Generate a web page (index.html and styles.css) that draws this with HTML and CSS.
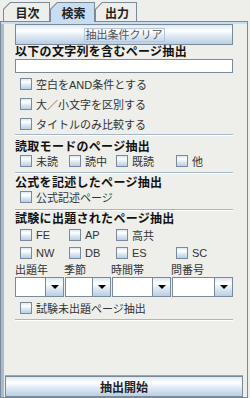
FILE: index.html
```html
<!DOCTYPE html>
<html lang="ja">
    <head>
        <meta charset="UTF-8">
        <title>検索</title>
        <link rel="stylesheet" href="styles.css">
    </head>
    <body>
        <div class="window">
            <div class="tabs">
                <div class="tab"><div class="tab-label">目次</div></div>
                <div class="tab tab-selected"><div class="tab-label">検索</div></div>
                <div class="tab tab-last"><div class="tab-label">出力</div></div>
            </div>
            <div class="panel">
                <div class="content">
                    <button class="btn btn-clear"><span class="focus">抽出条件クリア</span></button>

                    <div class="heading">以下の文字列を含むページ抽出</div>
                    <input type="text" class="field">
                    <label class="check first"><input type="checkbox">空白をAND条件とする</label>
                    <label class="check"><input type="checkbox">大／小文字を区別する</label>
                    <label class="check"><input type="checkbox">タイトルのみ比較する</label>
                    <div class="sep"></div>

                    <div class="heading h-read">読取モードのページ抽出</div>
                    <div class="group row-read">
                        <label class="check"><input type="checkbox">未読</label>
                        <label class="check"><input type="checkbox">読中</label>
                        <label class="check"><input type="checkbox">既読</label>
                        <label class="check"><input type="checkbox">他</label>
                    </div>
                    <div class="sep sep-read"></div>

                    <div class="heading h-formula">公式を記述したページ抽出</div>
                    <label class="check row-formula"><input type="checkbox">公式記述ページ</label>
                    <div class="sep sep-formula"></div>

                    <div class="heading h-exam">試験に出題されたページ抽出</div>
                    <div class="group row-exam">
                        <label class="check"><input type="checkbox">FE</label>
                        <label class="check"><input type="checkbox">AP</label>
                        <label class="check"><input type="checkbox">高共</label>
                        <span></span>
                    </div>
                    <div class="group row-exam">
                        <label class="check"><input type="checkbox">NW</label>
                        <label class="check"><input type="checkbox">DB</label>
                        <label class="check"><input type="checkbox">ES</label>
                        <label class="check"><input type="checkbox">SC</label>
                    </div>
                    <div class="group combo-labels">
                        <span>出題年</span>
                        <span>季節</span>
                        <span>時間帯</span>
                        <span>問番号</span>
                    </div>
                    <div class="group combos">
                        <div class="combo"><div class="combo-field"></div><div class="combo-arrow"></div></div>
                        <div class="combo"><div class="combo-field"></div><div class="combo-arrow"></div></div>
                        <div class="combo"><div class="combo-field"></div><div class="combo-arrow"></div></div>
                        <div class="combo"><div class="combo-field"></div><div class="combo-arrow"></div></div>
                    </div>
                    <label class="check row-unused"><input type="checkbox">試験未出題ページ抽出</label>
                    <div class="sep sep-exam"></div>
                </div>
                <div class="footer">
                    <button class="btn btn-start">抽出開始</button>
                </div>
            </div>
        </div>
    </body>
</html>
```

FILE: styles.css
```css
/* Global styles */
* {
    margin: 0;
    padding: 0;
    box-sizing: border-box;
}

body {
    background-color: #eeeeea;
    font-family: "Liberation Sans", "Noto Sans CJK JP", sans-serif;
    font-size: 11px;
    color: #333;
}

.window {
    width: 250px;
    height: 398px;
    display: flex;
    flex-direction: column;
}

/* Tabs */
.tabs {
    height: 21px;
    display: flex;
    align-items: flex-end;
    padding-left: 3px;
}

.tab {
    width: 47px;
    height: 19px;
    background: #7a8a99;
    padding: 1px 1px 0 1px;
    clip-path: polygon(0 7px, 7px 0, 100% 0, 100% 100%, 0 100%);
}

.tab-selected {
    width: 45px;
    height: 20px;
    margin-bottom: -1px;
    position: relative;
    z-index: 1;
}

.tab-last {
    width: 42px;
}

.tab-label {
    height: 100%;
    background: #eeeeea;
    clip-path: polygon(0 6.5px, 6.5px 0, 100% 0, 100% 100%, 0 100%);
    display: flex;
    align-items: center;
    justify-content: center;
    padding-left: 2px;
    font-size: 12px;
    font-weight: bold;
    color: #222;
}

.tab-selected .tab-label {
    background: #c8ddf2;
}

/* Panel */
.panel {
    flex: 1;
    margin: 0 2px 0 0;
    border: 1px solid #7a8a99;
    box-shadow: inset 0 2px 0 #c8ddf2, inset 3px 0 0 #a9bccf;
    display: flex;
    flex-direction: column;
    padding: 0 4px 0 4px;
}

.content {
    flex: 1;
    padding: 2px 10px 0;
    display: flex;
    flex-direction: column;
}

.btn {
    width: 100%;
    height: 21px;
    border: 1px solid #7a8a99;
    background: linear-gradient(to bottom, #dde8f3 0%, #ffffff 30%, #dde8f3 60%, #b8cfe5 100%);
    font-family: inherit;
    display: flex;
    align-items: center;
    justify-content: center;
}

.btn-clear {
    font-size: 11px;
    color: #555;
}

.btn-clear .focus {
    border: 1px solid #b3c6da;
    padding: 0 1px;
    line-height: 12px;
}

.btn-start {
    font-size: 12px;
    font-weight: bold;
    color: #222;
}

.heading {
    height: 14px;
    line-height: 14px;
    font-size: 12px;
    font-weight: bold;
    color: #111;
    letter-spacing: 0.3px;
}

.field {
    width: 100%;
    height: 14px;
    border: 1px solid #7a8a99;
    background: #fff;
}

.check {
    display: flex;
    align-items: center;
    height: 20px;
    padding-left: 5px;
    gap: 4px;
    white-space: nowrap;
}

.check input {
    appearance: none;
    width: 12px;
    height: 12px;
    margin: 0;
    flex: none;
    border: 1px solid #7a8a99;
    background: linear-gradient(to bottom, #dde8f3 0%, #ffffff 30%, #dde8f3 60%, #b8cfe5 100%);
}

.check.first {
    margin-top: 1px;
}

.sep {
    height: 2px;
    border-top: 1px solid #a3b8cc;
    border-bottom: 1px solid #ffffff;
}

.group {
    display: grid;
    grid-template-columns: 49px 47px 60px 1fr;
}

.h-read {
    margin-top: 4px;
}

.row-read .check {
    height: 14px;
}

.sep-read {
    margin-top: 4px;
}

.h-formula {
    margin-top: 2px;
}

.row-formula {
    height: 14px;
}

.sep-formula {
    margin-top: 5px;
}

.h-exam {
    margin-top: 1px;
}

.row-exam .check {
    height: 18px;
}

.row-exam:first-of-type {
    margin-top: 1px;
}

.combo-labels {
    margin-top: 1px;
    height: 14px;
    line-height: 14px;
}

.combos {
    height: 20px;
}

.combo {
    display: flex;
    border: 1px solid #7a8a99;
}

.combo + .combo {
    margin-left: 1px;
}

.combo-field {
    flex: 1;
    background: #fff;
}

.combo-arrow {
    width: 18px;
    border-left: 1px solid #7a8a99;
    background: linear-gradient(to bottom, #dde8f3 0%, #ffffff 30%, #dde8f3 60%, #b8cfe5 100%);
    display: flex;
    align-items: center;
    justify-content: center;
}

.combo-arrow::after {
    content: "";
    border-left: 4px solid transparent;
    border-right: 4px solid transparent;
    border-top: 4px solid #000;
}

.row-unused {
    margin-top: 1px;
}

.sep-exam {
    margin-top: 1px;
}

.footer {
    border-top: 1px solid #9aa6b2;
}
```
